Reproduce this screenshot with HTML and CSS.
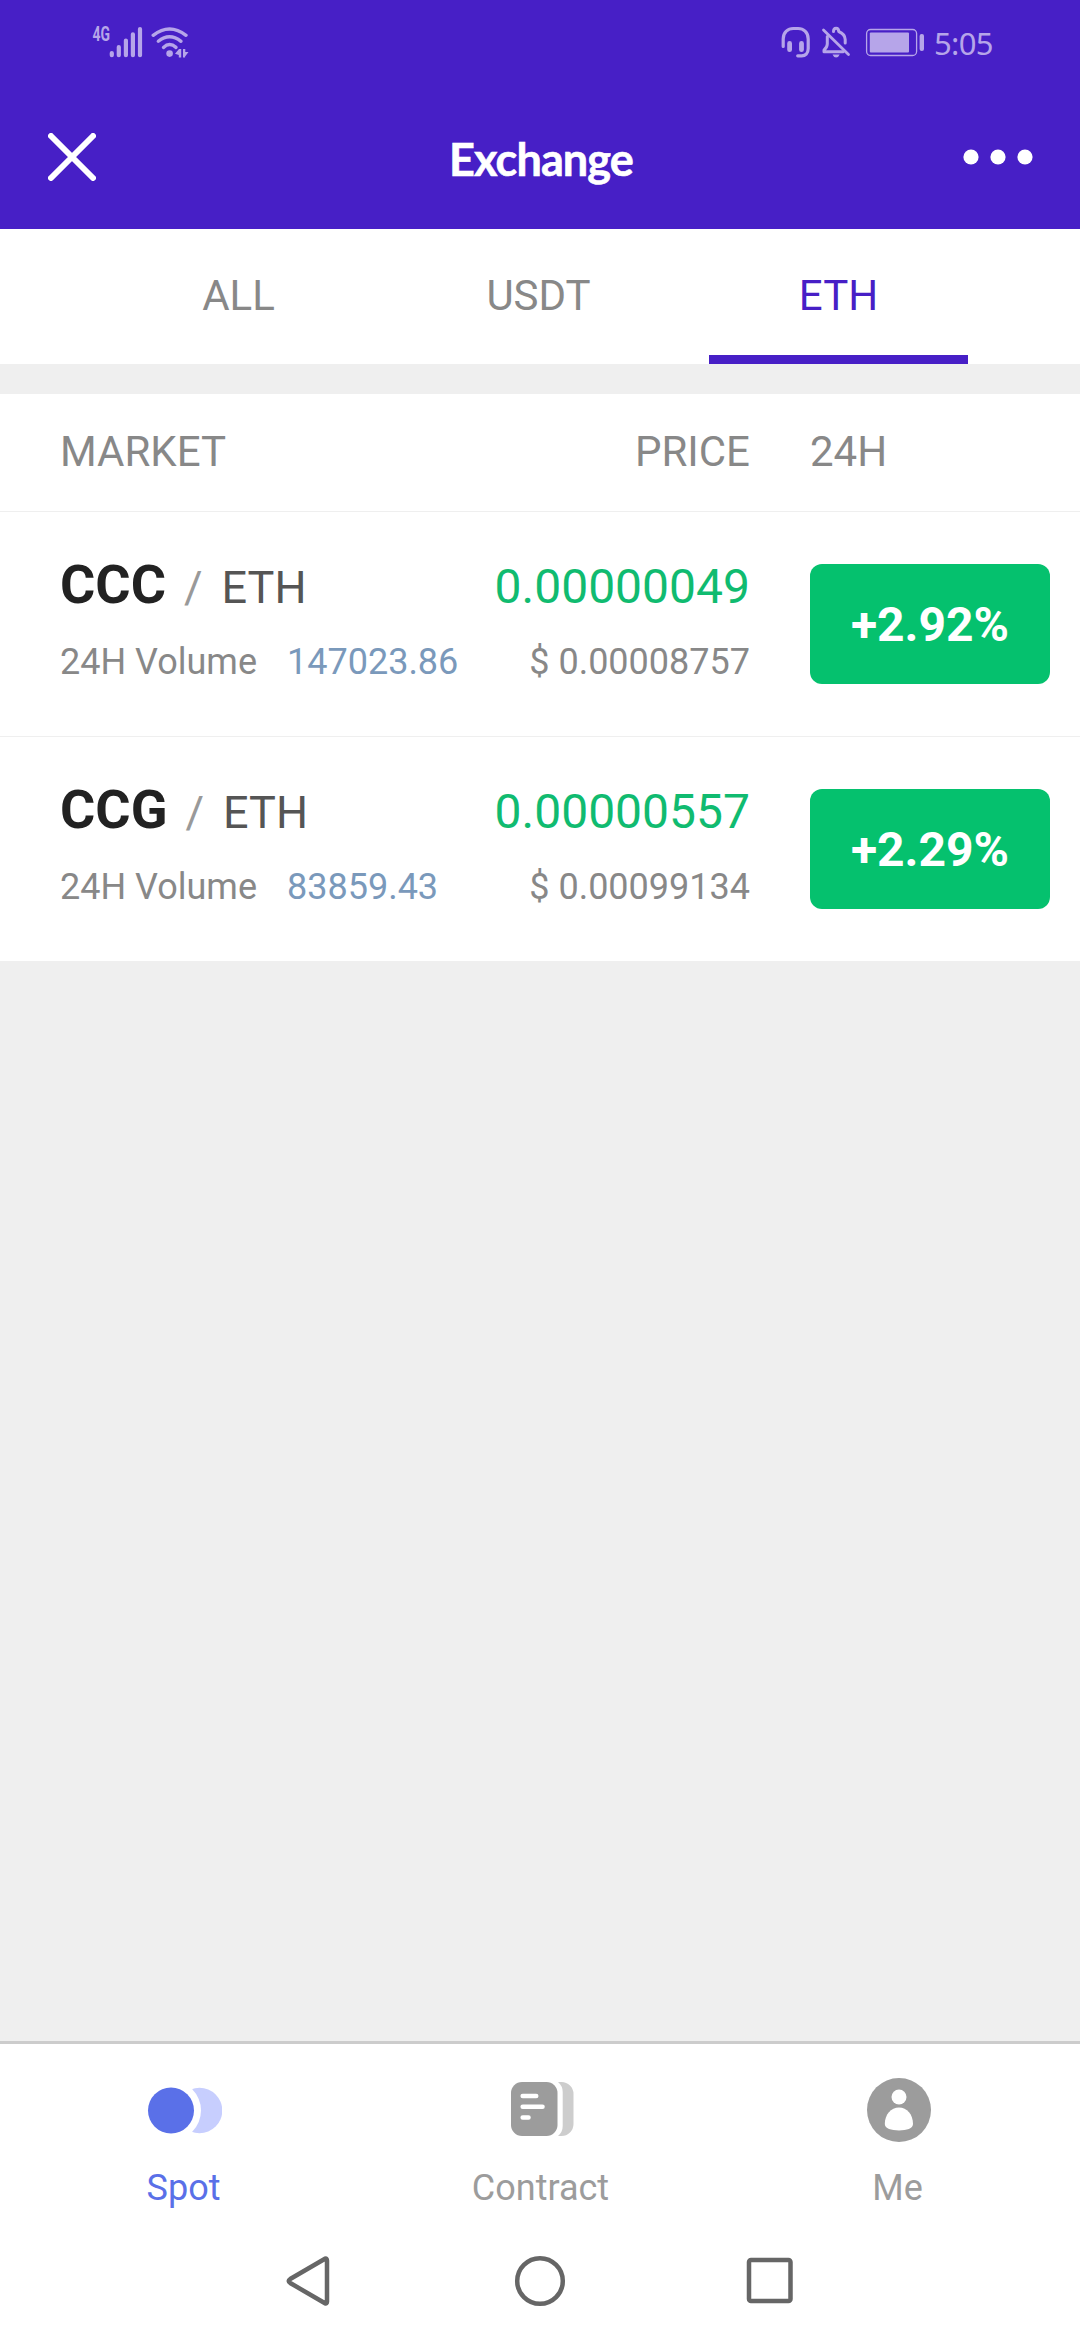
FILE: index.html
```html
<!DOCTYPE html>
<html lang="en">
<head>
<meta charset="utf-8">
<title>Exchange</title>
<link rel="stylesheet" href="styles.css">
</head>
<body>
<div class="screen">
  <header class="header">
    <div class="status-bar">
      <div class="status-group">
        <svg width="52" height="50" viewBox="91 17 52 50">
          <text x="92.5" y="40.7" textLength="17.5" lengthAdjust="spacingAndGlyphs" class="network">4G</text>
          <path d="M111.8 53v2.2M118.8 47v8.2M125.9 40.5v14.7M132.9 34.3v20.9M140 29v26.2" fill="none" stroke="currentColor" stroke-width="4.2" stroke-linecap="round"/>
        </svg>
        <svg width="40" height="34" viewBox="150 25 40 34">
          <g fill="none" stroke="currentColor" stroke-width="3.4" stroke-linecap="round">
            <path d="M153.2 35.3Q169.5 22.5 186 35.3"/>
            <path d="M158.3 41.3Q169.5 32.2 181 41.3"/>
            <path d="M163.5 47.4Q169.5 41.8 176 47.4"/>
          </g>
          <circle cx="169.6" cy="53.6" r="3.3" fill="currentColor"/>
          <path d="M175 53.8l4-4.8h2.2v8.5h-2.4V55zM183 49h2.3v3h3.2l-3.4 4.5V57.5H183z" fill="currentColor"/>
        </svg>
      </div>
      <div class="status-group">
        <svg width="147" height="34" viewBox="779 25 147 34">
          <g fill="none" stroke="currentColor" stroke-linecap="round" stroke-linejoin="round">
            <path d="M782.2 46.5V39c0-7 5-10.5 10-10.5h5c5 0 10 3.5 10 10.5v9.500c0 5-3 7.300-6.500 7.300h-4" stroke-width="3.200"/>
            <path d="M788.600 43.500v6.200M800.500 43.500v6.200" stroke-width="4.800"/>
            <path d="M822.500 30l25 24.500" stroke-width="2.800"/>
            <path d="M826.300 36.500v7.500q0 3-3.300 6.200v1.600h19" stroke-width="3"/>
            <path d="M832.500 31.500q0-3.200 2.600-3.200t2.600 3.200q6.200 2.500 6.500 8v3.500" stroke-width="3"/>
            <rect x="865.600" y="29.500" width="50" height="26" rx="4" stroke-width="1.300"/>
          </g>
          <path d="M831.500 54.600h7.200q-1 2.800-3.600 2.800t-3.600-2.800z" fill="currentColor"/>
          <rect x="868.800" y="32.500" width="39.200" height="20" rx="1" fill="currentColor"/>
          <rect x="918.600" y="34" width="4.400" height="17" rx="2" fill="currentColor"/>
        </svg>
        <span class="clock">5:05</span>
      </div>
    </div>
    <div class="title-bar">
      <svg width="48" height="48" viewBox="0 0 48 48"><path d="M3 3l42 42M45 3L3 45" stroke="#fff" stroke-width="6" stroke-linecap="round"/></svg>
      <h1 class="title">Exchange</h1>
      <svg width="70" height="16" viewBox="0 0 70 16" fill="#fff"><circle cx="8" cy="8" r="7.600"/><circle cx="35" cy="8" r="7.600"/><circle cx="62" cy="8" r="7.600"/></svg>
    </div>
  </header>

  <nav class="tabs">
    <span class="tab">ALL</span>
    <span class="tab">USDT</span>
    <span class="tab tab-active">ETH</span>
  </nav>

  <main class="market">
    <div class="market-head">
      <span>MARKET</span><span class="right">PRICE</span><span class="day">24H</span>
    </div>
    <section class="row">
      <div>
        <div class="line-main pair"><b class="coin">CCC</b><span class="slash">/</span><span class="base">ETH</span></div>
        <div class="line-sub">24H Volume<span class="volume">147023.86</span></div>
      </div>
      <div class="right">
        <div class="line-main price">0.00000049</div>
        <div class="line-sub">$ 0.00008757</div>
      </div>
      <div class="change">+2.92%</div>
    </section>
    <section class="row">
      <div>
        <div class="line-main pair"><b class="coin">CCG</b><span class="slash">/</span><span class="base">ETH</span></div>
        <div class="line-sub">24H Volume<span class="volume">83859.43</span></div>
      </div>
      <div class="right">
        <div class="line-main price">0.00000557</div>
        <div class="line-sub">$ 0.00099134</div>
      </div>
      <div class="change">+2.29%</div>
    </section>
  </main>

  <footer class="footer">
    <div class="menu">
      <div class="menu-item menu-active">
        <svg width="76" height="66" viewBox="0 0 76 66">
          <circle cx="53.500" cy="33.500" r="22.800" fill="#c7cefe"/>
          <circle cx="25" cy="33.500" r="30" fill="#fff"/>
          <circle cx="25" cy="33.500" r="23" fill="#5a70e8"/>
        </svg>
        <span>Spot</span>
      </div>
      <div class="menu-item">
        <svg width="66" height="66" viewBox="0 0 66 66">
          <path d="M50 5h3.500a12 12 0 0 1 12 12v30a12 12 0 0 1-12 12H50q4.700-4 4.700-10V15q0-6-4.700-10z" fill="#cdcdcd"/>
          <rect x="3" y="5" width="46.500" height="54" rx="11" fill="#9c9c9c"/>
          <path d="M14.700 19h13.500M14.700 29.700h19.800M14.700 40.500h5.800" stroke="#fff" stroke-width="4.600" stroke-linecap="round"/>
        </svg>
        <span>Contract</span>
      </div>
      <div class="menu-item">
        <svg width="66" height="66" viewBox="0 0 66 66">
          <circle cx="34" cy="33" r="32" fill="#9c9c9c"/>
          <circle cx="34" cy="20" r="7.500" fill="#fff"/>
          <path d="M34 30.500C26 30.500 19.800 37.500 19.800 47c0 4.500 6.500 6.400 14.200 6.400S48 51.500 48 47c0-9.500-6-16.500-14-16.500z" fill="#fff"/>
        </svg>
        <span>Me</span>
      </div>
    </div>
    <div class="system-nav">
      <svg width="52" height="52" viewBox="0 0 52 52"><path d="M41 3.700L6.200 24q-3 2 0 4L41 48.300q2 .7 2-1.800v-41q0-2.500-2-1.800z"/></svg>
      <svg width="52" height="52" viewBox="0 0 52 52"><circle cx="26" cy="26" r="22.800"/></svg>
      <svg width="52" height="52" viewBox="0 0 52 52"><rect x="5" y="5" width="41.500" height="41" rx="2"/></svg>
    </div>
  </footer>
</div>
</body>
</html>
```
FILE: styles.css
```css
* { box-sizing: border-box; }

body {
  margin: 0;
  font-family: Roboto, sans-serif;
  color: #888;
}

.screen {
  width: 1080px;
  height: 2340px;
  display: flex;
  flex-direction: column;
  background: #efefef;
}

.header {
  height: 229px;
  background: #471fc6;
  color: #fff;
}

.status-bar {
  height: 84px;
  padding: 0 87px 0 91px;
  display: flex;
  justify-content: space-between;
  align-items: center;
  color: #b6a5e9;
}

.status-group {
  display: flex;
  align-items: center;
  gap: 7px;
}

.network {
  font-size: 20.5px;
  font-weight: 700;
  fill: currentColor;
}

.clock {
  font-family: "Noto Sans", sans-serif;
  font-size: 31px;
  line-height: 32px;
  letter-spacing: -0.6px;
  padding-top: 2px;
}

.title-bar {
  height: 146px;
  padding: 0 47px 0 48px;
  display: flex;
  justify-content: space-between;
  align-items: center;
}

.title {
  margin: 0 0 0 23px;
  font-family: Lato, sans-serif;
  font-size: 45px;
  font-weight: 700;
  line-height: 54px;
  letter-spacing: -0.9px;
  -webkit-text-stroke: 0.6px #fff;
  padding-top: 4px;
}

.tabs {
  height: 135px;
  padding: 0 92px 0 89px;
  display: flex;
  justify-content: space-between;
  background: #fff;
  font-size: 42px;
}

.tab {
  width: 259px;
  margin: 0 20px;
  line-height: 133px;
  text-align: center;
}

.tab-active {
  height: 135px;
  color: #471fc6;
  box-shadow: inset 0 -9px #471fc6;
}

.market {
  margin-top: 30px;
  background: #fff;
}

.market-head,
.row {
  display: grid;
  grid-template-columns: 400px 290px 300px;
  padding: 0 30px 0 60px;
}

.market-head {
  height: 117px;
  font-size: 42px;
  line-height: 115px;
}

.day,
.change { margin-left: 60px; }

.right { text-align: right; }

.row {
  height: 225px;
  border-top: 1px solid #efefef;
  padding-top: 42px;
  align-items: start;
}

.line-main {
  height: 66px;
  line-height: 66px;
  white-space: nowrap;
}

.pair { line-height: 62px; }

.coin {
  font-size: 54px;
  color: #222;
}

.slash {
  margin: 0 19px 0 18px;
  font-size: 45px;
  color: #999;
}

.base {
  font-size: 45px;
  color: #555;
}

.price {
  font-size: 48px;
  color: #10bb70;
}

.line-sub {
  margin-top: 12px;
  font-size: 36px;
  line-height: 60px;
  white-space: nowrap;
}

.volume {
  margin-left: 30px;
  color: #7a99bb;
}

.change {
  height: 120px;
  margin-top: 10px;
  border-radius: 12px;
  background: #05c16e;
  color: #fff;
  font-size: 48px;
  font-weight: 700;
  line-height: 122px;
  text-align: center;
}

.footer {
  height: 299px;
  margin-top: auto;
  border-top: 3px solid #ccc;
  background: #fff;
}

.menu {
  height: 176px;
  padding: 0 4px 0 5px;
  display: grid;
  grid-template-columns: repeat(3, 1fr);
}

.menu-item {
  padding-top: 33px;
  display: flex;
  flex-direction: column;
  align-items: center;
  gap: 24px;
  font-size: 36px;
  line-height: 42px;
  color: #9c9c9c;
}

.menu-active { color: #5a70e8; }

.system-nav {
  height: 120px;
  padding: 35px 284px 0;
  display: flex;
  justify-content: space-between;
  fill: none;
  stroke: #666;
  stroke-width: 4.5px;
  stroke-linejoin: round;
}
```
